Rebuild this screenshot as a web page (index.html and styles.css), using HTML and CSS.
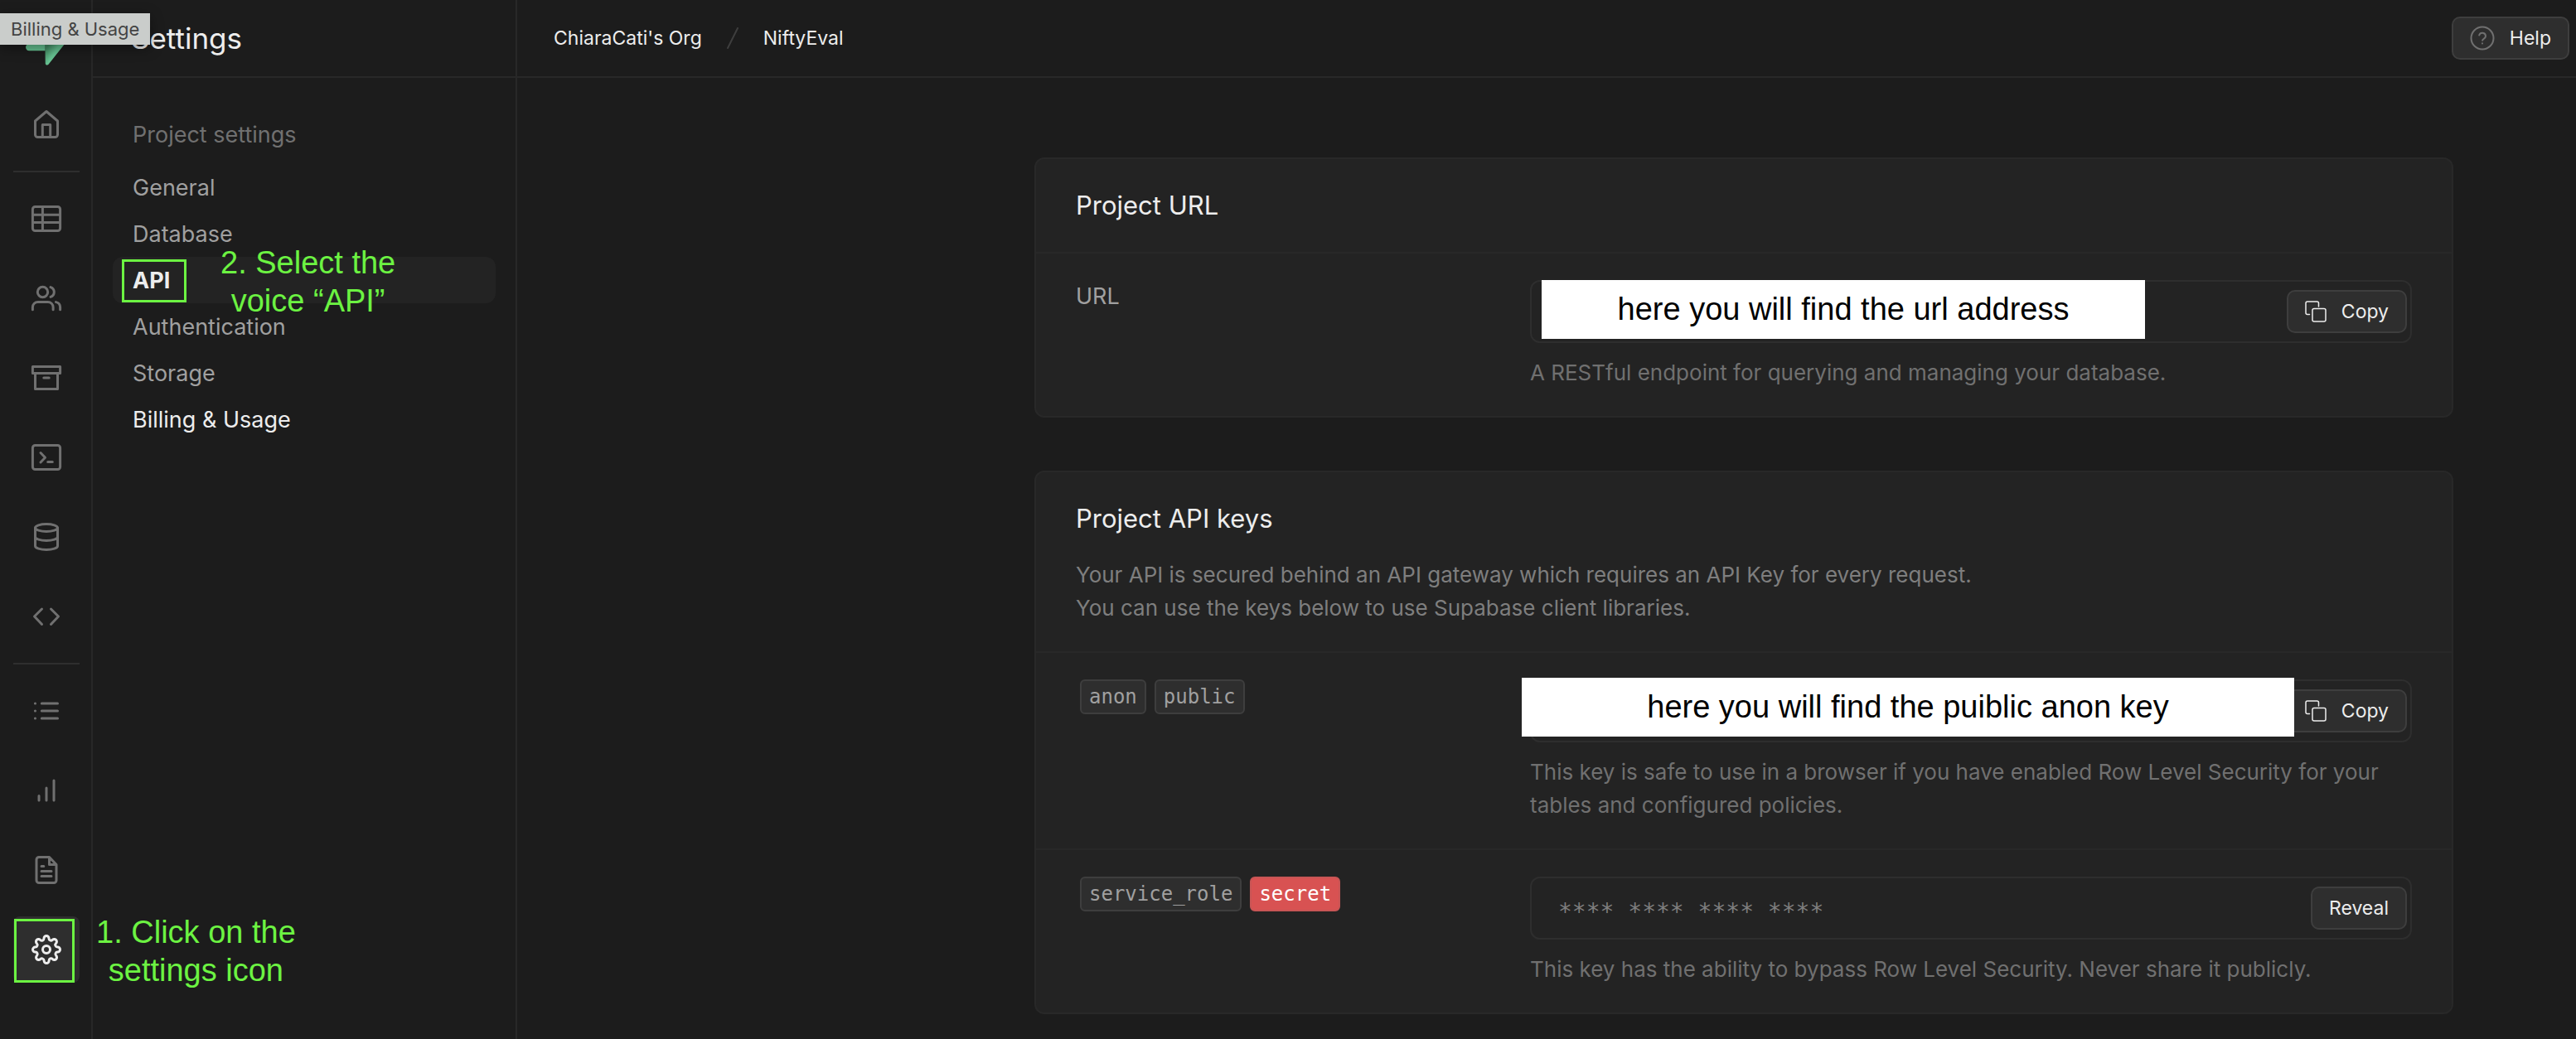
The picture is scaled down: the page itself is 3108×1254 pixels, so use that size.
FILE: index.html
```html
<!DOCTYPE html>
<html lang="en">
<head>
<meta charset="utf-8">
<title>API Settings</title>
<link rel="stylesheet" href="styles.css">
</head>
<body>
<svg class="sprite" aria-hidden="true">
  <symbol id="i-copy" viewBox="0 0 26 26">
    <path d="M16.500 7V3a2 2 0 0 0-2-2H3a2 2 0 0 0-2 2V14.500a2 2 0 0 0 2 2H5.500"/>
    <rect x="9" y="9.500" width="16" height="15.500" rx="2"/>
  </symbol>
</svg>
<div class="app">
  <nav class="rail" aria-label="Main">
    <a class="logo" href="#" aria-label="Supabase">
      <svg viewBox="0 0 109 113">
        <defs>
          <linearGradient id="shade" x1="54" y1="70" x2="76" y2="84" gradientUnits="userSpaceOnUse"><stop offset="0" stop-color="#438a62"/><stop offset="1" stop-color="#66c191"/></linearGradient>
        </defs>
        <path fill="url(#shade)" d="M63.708 110.284C60.848 113.885 55.050 111.912 54.981 107.314L53.974 40.063H99.194C107.384 40.063 111.952 49.523 106.859 55.937Z"/>
        <path fill="#66c191" d="M45.317 2.071C48.177-1.530 53.975.443 54.043 5.041L54.485 72.292H9.831C1.640 72.292-2.928 62.832 2.166 56.418Z"/>
      </svg>
    </a>
    <a class="rail-item" href="#" aria-label="Home"><svg viewBox="-20 -20 40 40"><path d="M0-15.500 13.500-4V12.500a3 3 0 0 1-3 3h-21a3 3 0 0 1-3-3V-4ZM-4.700 15.500V.5H4.700v15"/></svg></a>
    <hr>
    <a class="rail-item" href="#" aria-label="Table editor"><svg viewBox="-20 -20 40 40"><rect x="-16.600" y="-14.500" width="33.200" height="29" rx="3"/><path d="M-4.600-14.500v29M-16.600-4.800h33.200M-16.600 4.500h33.200"/></svg></a>
    <a class="rail-item" href="#" aria-label="Authentication"><svg viewBox="-20 -20 40 40"><circle cx="-4.500" cy="-7.500" r="6.200"/><path d="M-16.600 13.800v-3a6.400 6.400 0 0 1 6.400-6.400H1.700a6.400 6.400 0 0 1 6.400 6.400v3M5-13.400a6.200 6.200 0 0 1 0 11.800M11.500 4.600a6.500 6.500 0 0 1 5.100 6.200v3"/></svg></a>
    <a class="rail-item" href="#" aria-label="Storage"><svg viewBox="-20 -20 40 40"><path d="M-16.600-13.600h33.200v8.200h-33.200ZM-13.500-5.400v19h27v-19M-3.200 0h6.400"/></svg></a>
    <a class="rail-item" href="#" aria-label="SQL editor"><svg viewBox="-20 -20 40 40"><rect x="-16.600" y="-14.500" width="33.200" height="29" rx="3"/><path d="M-7-5.500-1.500.3-7 6M1.700 5.500h5.600"/></svg></a>
    <a class="rail-item" href="#" aria-label="Database"><svg viewBox="-20 -20 40 40"><ellipse cy="-11" rx="13.500" ry="4.500"/><path d="M-13.500-11V11c0 2.500 6 4.500 13.500 4.500S13.500 13.500 13.500 11V-11M-13.500 0c0 2.500 6 4.500 13.500 4.500S13.500 2.500 13.500 0"/></svg></a>
    <a class="rail-item" href="#" aria-label="API docs"><svg viewBox="-20 -20 40 40"><path d="M-5.500-9-14.500 0l9 9.500M5.500-9l9 9-9 9.500"/></svg></a>
    <hr>
    <a class="rail-item" href="#" aria-label="Logs"><svg viewBox="-20 -20 40 40"><path d="M-5.700-9H13.500M-5.700 0H13.500M-5.700 9H13.500M-13.600-9h.1M-13.600 0h.1M-13.600 9h.1"/></svg></a>
    <a class="rail-item" href="#" aria-label="Reports"><svg viewBox="-20 -20 40 40"><path d="M-9 6.500V12M0-3V12M9-12V12"/></svg></a>
    <a class="rail-item" href="#" aria-label="Documentation"><svg viewBox="-20 -20 40 40"><path d="M3.500-15.500h-12.500a3 3 0 0 0-3 3v25a3 3 0 0 0 3 3h18a3 3 0 0 0 3-3V-6.500ZM3.500-15.500v9H12M-6-4.500h2.800M-6 1.500H6M-6 7.500H6"/></svg></a>
    <a class="rail-item rail-item-active" href="#" aria-label="Settings"><svg viewBox="-20 -20 40 40"><g transform="scale(1.500) translate(-12 -12)"><circle cx="12" cy="12" r="3"/><path d="M19.400 15a1.650 1.650 0 0 0 .33 1.820l.06.06a2 2 0 0 1 0 2.830 2 2 0 0 1-2.830 0l-.06-.06a1.650 1.650 0 0 0-1.820-.33 1.650 1.650 0 0 0-1 1.510V21a2 2 0 0 1-2 2 2 2 0 0 1-2-2v-.09A1.650 1.650 0 0 0 9 19.400a1.650 1.650 0 0 0-1.820.33l-.06.06a2 2 0 0 1-2.830 0 2 2 0 0 1 0-2.830l.06-.06a1.650 1.650 0 0 0 .33-1.820 1.650 1.650 0 0 0-1.510-1H3a2 2 0 0 1-2-2 2 2 0 0 1 2-2h.09A1.650 1.650 0 0 0 4.600 9a1.650 1.650 0 0 0-.33-1.820l-.06-.06a2 2 0 0 1 0-2.830 2 2 0 0 1 2.830 0l.06.06a1.650 1.650 0 0 0 1.820.33H9a1.650 1.650 0 0 0 1-1.510V3a2 2 0 0 1 2-2 2 2 0 0 1 2 2v.09a1.650 1.650 0 0 0 1 1.510 1.650 1.650 0 0 0 1.820-.33l.06-.06a2 2 0 0 1 2.830 0 2 2 0 0 1 0 2.830l-.06.06a1.650 1.650 0 0 0-.33 1.820V9a1.650 1.650 0 0 0 1.510 1H21a2 2 0 0 1 2 2 2 2 0 0 1-2 2h-.09a1.650 1.650 0 0 0-1.510 1z"/></g></svg>
      <span class="mark mark-settings"></span>
      <span class="note note-settings">1. Click on the<br>settings icon</span>
    </a>
  </nav>

  <aside class="menu">
    <header class="bar menu-bar"><h1>Settings</h1></header>
    <nav class="menu-list" aria-label="Project settings">
      <h2>Project settings</h2>
      <a href="#">General</a>
      <a href="#">Database</a>
      <a class="current" href="#" aria-current="page">API
        <span class="mark mark-api"></span>
        <span class="note note-api">2. Select the<br>voice “API”</span>
      </a>
      <a href="#">Authentication</a>
      <a href="#">Storage</a>
      <a class="hovered" href="#">Billing &amp; Usage</a>
    </nav>
  </aside>

  <div class="page">
    <header class="bar page-bar">
      <nav class="crumbs" aria-label="Breadcrumb">
        <a href="#">ChiaraCati's Org</a>
        <svg viewBox="0 0 14 26" aria-hidden="true"><path d="M13 1 1 25"/></svg>
        <a href="#">NiftyEval</a>
      </nav>
      <button class="btn" type="button">
        <svg class="help-icon" viewBox="0 0 30 30"><circle cx="15" cy="15" r="13.500"/><path d="M11.200 11.500a4 4 0 0 1 7.800 1.200c0 2.600-3.900 3.600-3.900 5M15 21.300v.2"/></svg>
        Help
      </button>
    </header>

    <main>
      <section class="card">
        <div class="card-head"><h2>Project URL</h2></div>
        <div class="row">
          <label for="url">URL</label>
          <div>
            <div class="field">
              <input id="url" type="text" readonly>
              <button class="btn" type="button"><svg class="copy-icon"><use href="#i-copy"/></svg>Copy</button>
              <span class="cover cover-url">here you will find the url address</span>
            </div>
            <p>A RESTful endpoint for querying and managing your database.</p>
          </div>
        </div>
      </section>

      <section class="card">
        <div class="card-head">
          <h2>Project API keys</h2>
          <p>Your API is secured behind an API gateway which requires an API Key for every request.<br>You can use the keys below to use Supabase client libraries.</p>
        </div>
        <div class="row">
          <label class="chips" for="anon"><code>anon</code><code>public</code></label>
          <div>
            <div class="field">
              <input id="anon" type="text" readonly>
              <button class="btn" type="button"><svg class="copy-icon"><use href="#i-copy"/></svg>Copy</button>
              <span class="cover cover-key">here you will find the puiblic anon key</span>
            </div>
            <p>This key is safe to use in a browser if you have enabled Row Level Security for your tables and configured policies.</p>
          </div>
        </div>
        <div class="row">
          <label class="chips" for="service"><code>service_role</code><code class="danger">secret</code></label>
          <div>
            <div class="field">
              <input id="service" type="text" readonly value="**** **** **** ****">
              <button class="btn" type="button">Reveal</button>
            </div>
            <p>This key has the ability to bypass Row Level Security. Never share it publicly.</p>
          </div>
        </div>
      </section>
    </main>
  </div>
</div>
<div class="tooltip" role="tooltip">Billing &amp; Usage</div>
</body>
</html>
```
FILE: styles.css
```css
:root {
  --bg: #1c1c1c;
  --panel: #232323;
  --line: #282828;
  --field-line: #2e2e2e;
  --raised: #2e2e2e;
  --raised-line: #3e3e3e;
  --text: #ededed;
  --text-soft: #a0a0a0;
  --text-mute: #7e7e7e;
  --text-dim: #707070;
  --mark: #6cf342;
}

* { box-sizing: border-box; }

body {
  margin: 0;
  background: var(--bg);
  color: var(--text);
  font: 27px/40px Inter, "Liberation Sans", sans-serif;
}

h1, h2, p { margin: 0; font-weight: 400; }
a { color: inherit; text-decoration: none; }
svg { display: block; fill: none; stroke: currentColor; stroke-linecap: round; stroke-linejoin: round; }
.sprite { display: none; }

.app { display: flex; min-height: 100vh; }

/* Icon rail */
.rail {
  flex: none;
  width: 112px;
  padding: 30px 14px 0 16px;
  border-right: 2px solid var(--line);
  display: flex;
  flex-direction: column;
  gap: 16px;
}
.logo { height: 64px; padding-left: 15px; }
.logo svg { width: 47px; height: 49px; stroke: none; }
.rail hr { width: 100%; height: 2px; margin: 0; border: 0; background: var(--field-line); }
.rail-item {
  position: relative;
  height: 80px;
  border-radius: 8px;
  display: grid;
  place-items: center;
  color: var(--text-dim);
}
.rail-item svg { width: 40px; height: 40px; stroke-width: 3px; }
.rail-item g { stroke-width: 2px; }
.rail-item-active { background: var(--raised); color: var(--text); }

/* Settings menu */
.bar { height: 94px; border-bottom: 2px solid var(--line); display: flex; align-items: center; }
.menu { flex: none; width: 512px; border-right: 2px solid var(--line); }
.menu-bar { padding-left: 46px; }
.menu h1 { font-size: 35px; }
.menu-list { padding: 40px 24px; display: flex; flex-direction: column; }
.menu-list h2, .menu-list a { padding: 2px 24px 0; font-size: 27px; line-height: 54px; }
.menu-list h2 { margin-bottom: 8px; color: var(--text-dim); }
.menu-list a { position: relative; border-radius: 12px; color: var(--text-soft); }
.menu-list .current { background: var(--panel); color: var(--text); font-weight: 700; }
.menu-list .hovered { color: var(--text); }

/* Page */
.page { flex: 1; min-width: 0; }
.page-bar { justify-content: space-between; padding: 0 8px 0 44px; font-size: 23px; }
.crumbs { display: flex; align-items: center; gap: 30px; }
.crumbs svg { width: 14px; height: 26px; color: var(--raised-line); stroke-width: 2px; }
.btn {
  height: 52px;
  padding: 0 20px;
  border: 2px solid var(--raised-line);
  border-radius: 10px;
  background: var(--raised);
  color: var(--text);
  font: 23px/32px Inter, "Liberation Sans", sans-serif;
  display: flex;
  align-items: center;
  gap: 18px;
}
.help-icon { width: 30px; height: 30px; color: var(--text-dim); stroke-width: 2px; }
.copy-icon { width: 26px; height: 26px; stroke-width: 1.500px; }

main { padding: 96px 148px 30px 624px; display: grid; gap: 64px; }
.card { border: 2px solid var(--line); border-radius: 12px; background: var(--panel); }
.card-head { padding: 32px 48px; display: grid; gap: 24px; }
.card-head h2 { font-size: 31px; line-height: 48px; }
.card-head p, .row p { font-size: 26px; }
.card-head p { color: var(--text-mute); }
.row {
  padding: 32px 48px;
  border-top: 2px solid var(--line);
  display: grid;
  grid-template-columns: 1fr 2fr;
  gap: 16px;
}
.row label { color: var(--text-soft); }
.row p { margin-top: 16px; color: var(--text-dim); }

.chips { display: flex; align-items: flex-start; gap: 10px; padding-left: 5px; }
.chips code {
  padding: 0 9px;
  border: 2px solid var(--raised-line);
  border-radius: 6px;
  background: var(--raised);
  font: 24px/38px "DejaVu Sans Mono", monospace;
}
.chips .danger { border-color: #c85555; background: #d85252; color: #fff; }

.field {
  position: relative;
  height: 76px;
  padding-right: 4px;
  border: 2px solid var(--field-line);
  border-radius: 12px;
  display: flex;
  align-items: center;
}
.field input {
  flex: 1;
  min-width: 0;
  height: 100%;
  padding: 8px 32px 0;
  border: 0;
  outline: 0;
  background: none;
  color: var(--text-mute);
  font: 28px/40px "DejaVu Sans Mono", monospace;
}

/* Tutorial annotations laid over the interface */
.note, .cover { position: absolute; font: 38px/46px "Liberation Sans", Arial, sans-serif; white-space: nowrap; }
.note { color: var(--mark); text-align: center; z-index: 1; }
.note-settings { left: 100px; top: -4px; }
.note-api { left: 130px; top: -16px; }
.mark { position: absolute; border: 3px solid var(--mark); }
.mark-settings { left: 1px; top: 3px; width: 73px; height: 77px; }
.mark-api { left: 11px; top: 3px; width: 78px; height: 52px; }
.cover { height: 71px; background: #fff; color: #000; line-height: 71px; text-align: center; }
.cover-url { left: 12px; top: -2px; width: 728px; }
.cover-key { left: -12px; top: -4px; width: 932px; }

.tooltip {
  position: absolute;
  left: 0;
  top: 16px;
  height: 38px;
  padding: 0 13px;
  background: #cacdcb;
  color: #444;
  font-size: 22px;
  line-height: 38px;
  box-shadow: 0 4px 16px rgba(0, 0, 0, .4);
  z-index: 2;
}
```
